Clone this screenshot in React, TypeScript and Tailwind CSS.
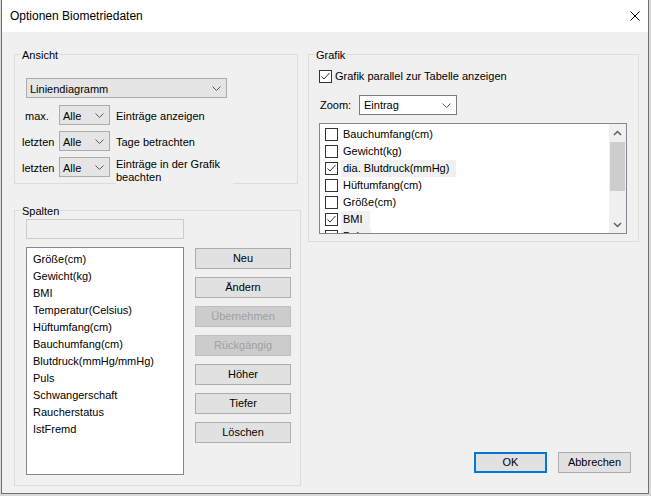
import React from "react";

const spalten = [
  "Größe(cm)",
  "Gewicht(kg)",
  "BMI",
  "Temperatur(Celsius)",
  "Hüftumfang(cm)",
  "Bauchumfang(cm)",
  "Blutdruck(mmHg/mmHg)",
  "Puls",
  "Schwangerschaft",
  "Raucherstatus",
  "IstFremd",
];

const grafikItems = [
  { label: "Bauchumfang(cm)", checked: false },
  { label: "Gewicht(kg)", checked: false },
  { label: "dia. Blutdruck(mmHg)", checked: true },
  { label: "Hüftumfang(cm)", checked: false },
  { label: "Größe(cm)", checked: false },
  { label: "BMI", checked: true },
  { label: "Puls", checked: true },
];

function Chevron() {
  return (
    <svg width="9" height="5" viewBox="0 0 9 5" className="shrink-0">
      <polyline points="0.5,0.5 4.5,4.5 8.5,0.5" fill="none" stroke="#5a5a5a" strokeWidth="1" />
    </svg>
  );
}

function Checkbox({ checked }: { checked: boolean }) {
  return (
    <svg width="13" height="13" viewBox="0 0 13 13" className="shrink-0">
      <rect x="0.5" y="0.5" width="12" height="12" fill="#ffffff" stroke="#333333" />
      {checked && (
        <polyline points="2.5,6.5 5,9 10.5,3" fill="none" stroke="#333333" strokeWidth="1" />
      )}
    </svg>
  );
}

function Combo({ value, className, pl, tx = "" }: { value: string; className: string; pl: string; tx?: string }) {
  return (
    <div className={`flex items-center justify-between h-[20px] border pr-[5px] ${pl} ${className}`}>
      <span className={`leading-[14px] ${tx}`}>{value}</span>
      <Chevron />
    </div>
  );
}

function Btn({ label, disabled }: { label: string; disabled?: boolean }) {
  return (
    <div
      className={
        disabled
          ? "w-[96px] h-[21px] flex items-center justify-center border border-[#bfbfbf] bg-[#cccccc] text-[#a0a0a0]"
          : "w-[96px] h-[21px] flex items-center justify-center border border-[#adadad] bg-[#e1e1e1]"
      }
    >
      {label}
    </div>
  );
}

function GroupLabel({ text }: { text: string }) {
  return (
    <div className="-mt-[7px] ml-[6px] w-fit px-[1px] bg-[#f0f0f0] leading-[14px]">{text}</div>
  );
}

function RowLabel({ text, pl }: { text: string; pl: string }) {
  return <div className={`w-[44px] shrink-0 pt-[2px] ${pl}`}>{text}</div>;
}

export default function App() {
  return (
    <div className="w-[651px] h-[496px] bg-[#d9d9d9] overflow-hidden font-['Liberation_Sans',Arial,sans-serif] text-[11px] text-black">
      <div className="ml-[1px] w-[648px] h-[494px] border-x border-b border-[#707070] bg-[#f0f0f0] flex flex-col">
        {/* Titelleiste */}
        <div className="h-[32px] shrink-0 bg-white flex items-start justify-between pl-[8px] pt-[9px] pr-[8px]">
          <span className="text-[12px] leading-[15px]">Optionen Biometriedaten</span>
          <svg width="10" height="10" viewBox="0 0 10 10" className="mt-[2px]">
            <line x1="0.5" y1="0.5" x2="9.5" y2="9.5" stroke="#000" strokeWidth="1" />
            <line x1="9.5" y1="0.5" x2="0.5" y2="9.5" stroke="#000" strokeWidth="1" />
          </svg>
        </div>

        <div className="flex flex-1">
          {/* linke Spalte */}
          <div className="ml-[12px] w-[287px] flex flex-col">
            <div className="mt-[22px] w-[284px] h-[130px] border border-[#dcdcdc]">
              <GroupLabel text="Ansicht" />
              <Combo value="Liniendiagramm" pl="pl-[3px]" tx="pt-[2px]" className="mt-[16px] ml-[11px] w-[201px] bg-[#e5e5e5] border-[#acacac]" />

              <div className="mt-[7px] flex items-center h-[20px]">
                <RowLabel text="max." pl="pl-[10px]" />
                <Combo value="Alle" pl="pl-[3px]" tx="pt-[2px]" className="w-[51px] bg-[#e5e5e5] border-[#acacac]" />
                <span className="ml-[6px] pt-[2px]">Einträge anzeigen</span>
              </div>
              <div className="mt-[6px] flex items-center h-[20px]">
                <RowLabel text="letzten" pl="pl-[7px]" />
                <Combo value="Alle" pl="pl-[3px]" tx="pt-[2px]" className="w-[51px] bg-[#e5e5e5] border-[#acacac]" />
                <span className="ml-[6px] pt-[2px]">Tage betrachten</span>
              </div>
              <div className="mt-[6px] flex items-start h-[20px]">
                <div className="h-[20px] flex items-center">
                  <RowLabel text="letzten" pl="pl-[7px]" />
                  <Combo value="Alle" pl="pl-[3px]" tx="pt-[2px]" className="w-[51px] bg-[#e5e5e5] border-[#acacac]" />
                </div>
                <div className="ml-[6px] w-[117px] h-[28px] shrink-0 pt-[1px] leading-[13px] bg-[#f0f0f0]">
                  Einträge in der Grafik
                  <br />
                  beachten
                </div>
              </div>
            </div>

            <div className="mt-[26px] w-[287px] h-[276px] border border-[#dcdcdc]">
              <GroupLabel text="Spalten" />
              <div className="mt-[1px] ml-[11px] w-[158px] h-[20px] border border-[#cccccc] bg-[#f0f0f0]" />
              <div className="mt-[8px] ml-[11px] flex">
                <div className="w-[158px] h-[228px] border border-[#828790] bg-white pl-[6px] pt-[3px]">
                  {spalten.map((s) => (
                    <div key={s} className="h-[17px] leading-[17px]">
                      {s}
                    </div>
                  ))}
                </div>
                <div className="ml-[11px] pt-[1px] flex flex-col gap-[8px]">
                  <Btn label="Neu" />
                  <Btn label="Ändern" />
                  <Btn label="Übernehmen" disabled />
                  <Btn label="Rückgängig" disabled />
                  <Btn label="Höher" />
                  <Btn label="Tiefer" />
                  <Btn label="Löschen" />
                </div>
              </div>
            </div>
          </div>

          {/* rechte Spalte */}
          <div className="ml-[7px] w-[331px] flex flex-col">
            <div className="mt-[22px] h-[188px] border border-[#dcdcdc]">
              <GroupLabel text="Grafik" />
              <div className="mt-[8px] ml-[10px] h-[13px] flex items-center gap-[3px]">
                <Checkbox checked />
                <span className="leading-[13px]">Grafik parallel zur Tabelle anzeigen</span>
              </div>
              <div className="mt-[12px] ml-[11px] flex items-center h-[20px]">
                <span className="w-[39px] shrink-0">Zoom:</span>
                <Combo value="Eintrag" pl="pl-[4px]" className="w-[98px] bg-white border-[#7a7a7a]" />
              </div>
              <div className="mt-[8px] ml-[10px] w-[308px] h-[111px] border border-[#828790] bg-white flex">
                <div className="flex-1 overflow-hidden pl-[5px] pt-[2px]">
                  {grafikItems.map((it) => (
                    <div key={it.label} className="h-[17px] flex items-center">
                      <Checkbox checked={it.checked} />
                      <span
                        className={`ml-[3px] h-[17px] leading-[17px] pl-[2px] pr-[7px] ${
                          it.checked ? "bg-[#f0f0f0]" : ""
                        }`}
                      >
                        {it.label}
                      </span>
                    </div>
                  ))}
                </div>
                <div className="w-[17px] shrink-0 bg-[#f0f0f0] flex flex-col">
                  <div className="h-[17px] flex items-center justify-center">
                    <svg width="9" height="6" viewBox="0 0 9 6">
                      <polyline points="1,5 4.5,1.5 8,5" fill="none" stroke="#606060" strokeWidth="1.5" />
                    </svg>
                  </div>
                  <div className="mt-[1px] mx-[1px] h-[49px] bg-[#cdcdcd]" />
                  <div className="flex-1" />
                  <div className="h-[17px] flex items-center justify-center">
                    <svg width="9" height="6" viewBox="0 0 9 6">
                      <polyline points="1,1 4.5,4.5 8,1" fill="none" stroke="#606060" strokeWidth="1.5" />
                    </svg>
                  </div>
                </div>
              </div>
            </div>

            <div className="mt-[210px] flex justify-end gap-[11px] pr-[8px]">
              <div className="w-[73px] h-[21px] flex items-center justify-center border-2 border-[#0078d7] bg-[#e1e1e1]">
                OK
              </div>
              <div className="w-[73px] h-[21px] flex items-center justify-center border border-[#adadad] bg-[#e1e1e1]">
                Abbrechen
              </div>
            </div>
          </div>
        </div>
      </div>
    </div>
  );
}
